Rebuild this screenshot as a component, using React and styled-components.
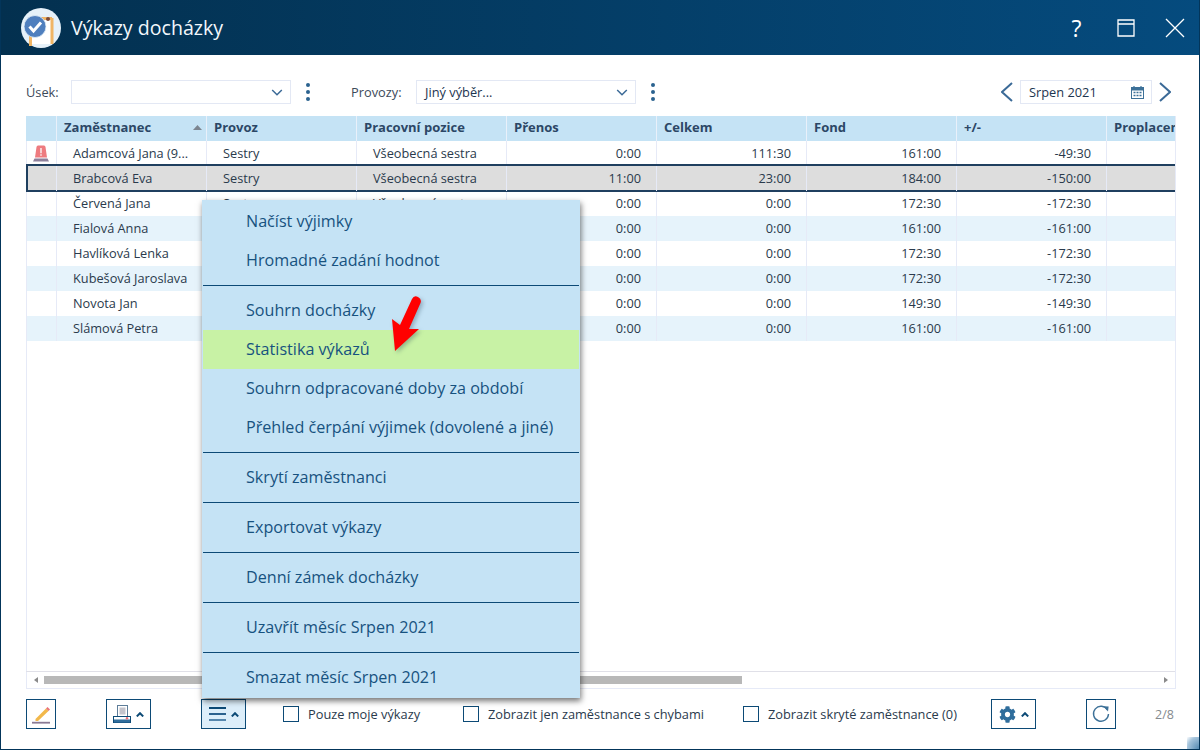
import React from 'react';
import styled, { createGlobalStyle } from 'styled-components';
import { FaCog } from 'react-icons/fa';

const GlobalStyle = createGlobalStyle`
  html, body {
    margin: 0;
    padding: 0;
    background: #fff;
  }
  * { box-sizing: border-box; }
`;

const Window = styled.div`
  position: relative;
  width: 1200px;
  height: 750px;
  display: flex;
  flex-direction: column;
  overflow: hidden;
  background: #fff;
  border: 1px solid #03355a;
  border-top: 0;
  font-family: "Open Sans", sans-serif;
  color: #1d3550;
`;

const TitleBar = styled.div`
  height: 55px;
  margin: 0 -1px;
  flex: none;
  display: flex;
  align-items: center;
  padding: 0 1px 0 21px;
  background: linear-gradient(90deg, #03304f 0%, #054b7e 100%);
`;

const Title = styled.div`
  margin-left: 10px;
  flex: 1;
  font-size: 19.6px;
  color: #f2f7fb;
`;

const WinButton = styled.div`
  width: 49px;
  height: 40px;
  display: flex;
  align-items: center;
  justify-content: center;
  color: #fff;
  font-size: 23px;
`;

const FilterRow = styled.div`
  height: 24px;
  margin: 25px 28px 0 25px;
  flex: none;
  display: flex;
  align-items: center;
`;

const FilterLabel = styled.span`
  color: #3c4a5a;
  font-size: 12.8px;
  width: ${(p) => p.$width}px;
`;

const Select = styled.div`
  width: ${(p) => p.$width}px;
  height: 24px;
  display: flex;
  align-items: center;
  justify-content: space-between;
  padding: 0 7px 0 8px;
  border: 1px solid #e3e8f4;
  font-size: 12.8px;
`;

const DotsButton = styled.div`
  width: 4px;
  margin: 0 41px 0 15px;
  display: flex;
  flex-direction: column;
  gap: 3px;
  i {
    width: 4px;
    height: 4px;
    border-radius: 50%;
    background: #2b628f;
  }
`;

const MonthPicker = styled.div`
  margin-left: auto;
  display: flex;
  align-items: center;
  gap: 7px;
`;

const Grid = styled.div`
  flex: 1;
  margin: 12px 23px 0 25px;
  display: flex;
  flex-direction: column;
  min-height: 0;
  border-right: 1px solid #e6eaf7;
  border-bottom: 1px solid #e6eaf7;
  overflow: hidden;
`;

const Rows = styled.div`
  flex: 1;
  min-height: 0;
  overflow: hidden;
  box-shadow: inset 1px 0 0 #e6eaf7;
`;

const Row = styled.div`
  display: grid;
  grid-template-columns: 31px repeat(8, 150px);
  width: 1231px;
  height: 25px;
`;

const HeadRow = styled(Row)`
  flex: none;
  background: #c5e3f5;
`;

const HeadCell = styled.div`
  display: flex;
  align-items: center;
  justify-content: space-between;
  padding: 0 4px 3px 7px;
  border-right: 1px solid #e9f0fa;
  font-size: 13px;
  font-weight: 700;
  color: #2c4766;
  white-space: nowrap;
`;

const BodyRow = styled(Row)`
  position: relative;
  z-index: ${(p) => (p.$selected ? 1 : 0)};
  background: ${(p) => (p.$selected ? '#dddddd' : p.$alt ? '#e6f3fb' : '#fff')};
  box-shadow: ${(p) =>
    p.$selected
      ? '0 -2px 0 #1f3f5f, 0 1px 0 #1f3f5f, inset 0 -1px 0 #1f3f5f, inset 2px 0 0 #1f3f5f'
      : 'inset 1px 0 0 #e6eaf7'};
`;

const Cell = styled.div`
  display: flex;
  align-items: center;
  justify-content: ${(p) => (p.$num ? 'flex-end' : 'flex-start')};
  padding: ${(p) => (p.$num ? '0 15px 2px 0' : '0 4px 2px 16px')};
  border-right: 1px solid #e6eaf7;
  font-size: 12.75px;
  color: #2a3a4c;
  white-space: nowrap;
  overflow: hidden;
`;

const FlagCell = styled.div`
  display: flex;
  align-items: center;
  justify-content: center;
  border-right: 1px solid #e6eaf7;
`;

const ScrollBar = styled.div`
  height: 17px;
  flex: none;
  display: flex;
  align-items: center;
  justify-content: space-between;
  padding: 0 7px 0 8px;
  border-top: 1px solid #e0e0e8;
  box-shadow: inset 1px 0 0 #e6eaf7;
`;

const ScrollThumb = styled.div`
  width: 698px;
  height: 8px;
  margin: 0 auto 0 6px;
  background: #b8b8b8;
`;

const Toolbar = styled.div`
  height: 30px;
  margin: 10px 0 20px 25px;
  flex: none;
  display: flex;
  align-items: center;
`;

const ToolButton = styled.div`
  width: ${(p) => p.$width}px;
  height: 30px;
  margin-left: ${(p) => p.$left || 0}px;
  flex: none;
  display: flex;
  align-items: center;
  justify-content: center;
  gap: 5px;
  border: 1px solid #0c4a76;
  background: ${(p) => (p.$active ? '#dceefa' : '#fff')};
`;

const CheckItem = styled.label`
  margin-left: ${(p) => p.$left}px;
  width: ${(p) => p.$width}px;
  flex: none;
  display: flex;
  align-items: center;
  gap: 9px;
  font-size: 12.8px;
  line-height: 18px;
  color: #2a3a4c;
  white-space: nowrap;
`;

const CheckBox = styled.span`
  width: 16px;
  height: 16px;
  flex: none;
  border: 1px solid #0c4a76;
  background: #fff;
`;

const Pager = styled.span`
  margin-left: 39px;
  font-size: 12.5px;
  color: #85898e;
`;

const Menu = styled.div`
  position: absolute;
  left: 201px;
  top: 200px;
  width: 378px;
  height: 498px;
  padding: 1.5px 1px 0;
  background: #c5e3f5;
  box-shadow: 1px 3px 6px rgba(0, 0, 0, 0.55);
`;

const MenuItem = styled.div`
  height: 39px;
  display: flex;
  align-items: center;
  padding-left: 43px;
  font-size: 16.15px;
  color: #17527f;
  background: ${(p) => (p.$hot ? '#c8f2a5' : 'transparent')};
`;

const MenuLine = styled.div`
  height: 1px;
  margin: 5px 0;
  background: #0c4a76;
`;

const ArrowMark = styled.svg`
  position: absolute;
  left: 384px;
  top: 290px;
  filter: drop-shadow(2px 2px 2px rgba(40, 70, 90, 0.35));
`;

const Corner = styled.div`
  position: absolute;
  right: -1px;
  bottom: 0;
  width: 13px;
  height: 12px;
  background: radial-gradient(circle at 100% 100%, #4d85ae 0, #a5c4dc 70%, transparent 100%);
`;

const rows = [
  ['Adamcová Jana (9...', 'Sestry', '0:00', '111:30', '161:00', '-49:30'],
  ['Brabcová Eva', 'Sestry', '11:00', '23:00', '184:00', '-150:00'],
  ['Červená Jana', 'Sestry', '0:00', '0:00', '172:30', '-172:30'],
  ['Fialová Anna', 'Sestry', '0:00', '0:00', '161:00', '-161:00'],
  ['Havlíková Lenka', 'Sestry', '0:00', '0:00', '172:30', '-172:30'],
  ['Kubešová Jaroslava', 'Sestry', '0:00', '0:00', '172:30', '-172:30'],
  ['Novota Jan', 'Sestry', '0:00', '0:00', '149:30', '-149:30'],
  ['Slámová Petra', 'Sestry', '0:00', '0:00', '161:00', '-161:00'],
];

const Logo = () => (
  <svg width="40" height="40" viewBox="0 0 40 40">
    <circle cx="20" cy="20" r="20" fill="#e6f1f9" />
    <path d="M9 12 H31 V36 H9 Z" fill="#fff" />
    <path d="M9.5 38 V28 M31 10 V36 M16 10.5 H31" stroke="#f0b565" strokeWidth="3" fill="none" />
    <circle cx="27" cy="11" r="2" fill="#7a4a3a" />
    <circle cx="14" cy="18.5" r="11" fill="#4f7fbe" stroke="#e6f1f9" strokeWidth="0.8" />
    <path d="M8.5 18.5 L12.5 23 L20 14.5" stroke="#fff" strokeWidth="3" fill="none" />
  </svg>
);

const Chevron = ({ up, color = '#0c4a76', size = 8, weight = 1.5 }) => (
  <svg width={size} height={size - 3} viewBox="0 0 8 5">
    <path d={up ? 'M0.8 4.4 L4 1.2 L7.2 4.4' : 'M0.8 0.8 L4 4 L7.2 0.8'} stroke={color} strokeWidth={weight} fill="none" />
  </svg>
);

const Dots = () => (
  <DotsButton>
    <i />
    <i />
    <i />
  </DotsButton>
);

const Siren = () => (
  <svg width="16" height="17" viewBox="0 0 16 17">
    <path d="M2 12.5 L3.5 2 Q3.7 0.5 5 0.5 H11 Q12.3 0.5 12.5 2 L14 12.5 Z" fill="#ee7b7f" />
    <path d="M7.2 3 H8.8 V8.2 H7.2 Z M7.2 9.2 H8.8 V10.8 H7.2 Z" fill="#fbe6e6" />
    <path d="M1.5 13.5 H14.5 L16 16.5 H0 Z" fill="#8d7f9a" />
  </svg>
);

const Pencil = () => (
  <svg width="20" height="20" viewBox="0 0 20 20">
    <path d="M4.5 15 L15 4.5 L17.5 7 L7 17 L4.5 17 Z" fill="#f2b84b" />
    <path d="M15 4.5 L16.5 3 L19 5.5 L17.5 7 Z" fill="#e8747a" />
    <path d="M1 18.7 H19" stroke="#8a7a94" strokeWidth="1.8" />
  </svg>
);

const Printer = () => (
  <svg width="18" height="18" viewBox="0 0 18 18">
    <rect x="4.5" y="0.5" width="10" height="11" fill="#fff" stroke="#5e7d99" />
    <rect x="6.5" y="2.5" width="6" height="7" fill="#c4c4cc" />
    <rect x="0.5" y="11.5" width="17" height="6" fill="#fff" stroke="#0c4a76" />
    <rect x="1" y="14.5" width="16" height="3" fill="#2f6d9c" />
    <circle cx="14" cy="13.2" r="1.2" fill="#ea6a75" />
  </svg>
);

const Hamburger = () => (
  <svg width="17" height="14" viewBox="0 0 17 14">
    <path d="M0 1 H17" stroke="#0c4a76" strokeWidth="2" />
    <path d="M0 7 H17" stroke="#2b628f" strokeWidth="2" />
    <path d="M0 13 H17" stroke="#5486ad" strokeWidth="2" />
  </svg>
);

const Refresh = () => (
  <svg width="18" height="18" viewBox="0 0 18 18">
    <path d="M15.5 5 A7.5 7.5 0 1 0 16.5 9" stroke="#3d7198" strokeWidth="1.4" fill="none" />
    <path d="M11.5 1.2 L16.6 1.6 L16 6.4 Z" fill="#3d7198" />
  </svg>
);

const Calendar = () => (
  <svg width="13" height="13" viewBox="0 0 13 13">
    <rect x="0.5" y="1.5" width="12" height="11" fill="#fff" stroke="#3d7198" />
    <rect x="0.5" y="1.5" width="12" height="3" fill="#3d7198" />
    <path d="M3 0 V2 M10 0 V2" stroke="#3d7198" strokeWidth="1.2" />
    <path d="M2.5 6.5 H4.5 M5.5 6.5 H7.5 M8.5 6.5 H10.5 M2.5 9.5 H4.5 M5.5 9.5 H7.5 M8.5 9.5 H10.5" stroke="#3d7198" strokeWidth="1.6" />
  </svg>
);

const MonthArrow = ({ right }) => (
  <svg width="12" height="20" viewBox="0 0 12 20">
    <path d={right ? 'M1 1 L11 10 L1 19' : 'M11 1 L1 10 L11 19'} stroke="#3b6a97" strokeWidth="2" fill="none" />
  </svg>
);

export default function App() {
  return (
    <Window>
      <GlobalStyle />
      <TitleBar>
        <Logo />
        <Title>Výkazy docházky</Title>
        <WinButton>?</WinButton>
        <WinButton>
          <svg width="18" height="18" viewBox="0 0 18 18">
            <path d="M1 1 H17 V17 H1 Z M1 5 H17" stroke="#fff" strokeWidth="1.3" fill="none" />
          </svg>
        </WinButton>
        <WinButton>
          <svg width="20" height="20" viewBox="0 0 20 20">
            <path d="M1 1 L19 19 M19 1 L1 19" stroke="#fff" strokeWidth="1.3" />
          </svg>
        </WinButton>
      </TitleBar>

      <FilterRow>
        <FilterLabel $width={45}>Úsek:</FilterLabel>
        <Select $width={220}>
          <span />
          <Chevron size={12} color="#3b6a97" weight={1} />
        </Select>
        <Dots />
        <FilterLabel $width={65}>Provozy:</FilterLabel>
        <Select $width={220}>
          <span>Jiný výběr...</span>
          <Chevron size={12} color="#3b6a97" weight={1} />
        </Select>
        <Dots />
        <MonthPicker>
          <MonthArrow />
          <Select $width={132}>
            <span>Srpen 2021</span>
            <Calendar />
          </Select>
          <MonthArrow right />
        </MonthPicker>
      </FilterRow>

      <Grid>
        <HeadRow>
          <HeadCell />
          <HeadCell>
            Zaměstnanec
            <svg width="9" height="5" viewBox="0 0 9 5">
              <path d="M0 5 L4.5 0 L9 5 Z" fill="#7c8590" />
            </svg>
          </HeadCell>
          <HeadCell>Provoz</HeadCell>
          <HeadCell>Pracovní pozice</HeadCell>
          <HeadCell>Přenos</HeadCell>
          <HeadCell>Celkem</HeadCell>
          <HeadCell>Fond</HeadCell>
          <HeadCell>+/-</HeadCell>
          <HeadCell>Proplacené</HeadCell>
        </HeadRow>
        <Rows>
          {rows.map((r, i) => (
            <BodyRow key={r[0]} $selected={i === 1} $alt={i > 1 && i % 2 === 1}>
              <FlagCell>{i === 0 && <Siren />}</FlagCell>
              <Cell>{r[0]}</Cell>
              <Cell>{r[1]}</Cell>
              <Cell>Všeobecná sestra</Cell>
              <Cell $num>{r[2]}</Cell>
              <Cell $num>{r[3]}</Cell>
              <Cell $num>{r[4]}</Cell>
              <Cell $num>{r[5]}</Cell>
              <Cell />
            </BodyRow>
          ))}
        </Rows>
        <ScrollBar>
          <svg width="4" height="6" viewBox="0 0 4 6">
            <path d="M4 0 V6 L0 3 Z" fill="#8a8a8a" />
          </svg>
          <ScrollThumb />
          <svg width="4" height="6" viewBox="0 0 4 6">
            <path d="M0 0 V6 L4 3 Z" fill="#8a8a8a" />
          </svg>
        </ScrollBar>
      </Grid>

      <Toolbar>
        <ToolButton $width={30}>
          <Pencil />
        </ToolButton>
        <ToolButton $width={45} $left={50}>
          <Printer />
          <Chevron up size={8} weight={2} />
        </ToolButton>
        <ToolButton $width={45} $left={50} $active>
          <Hamburger />
          <Chevron up size={8} weight={2} />
        </ToolButton>
        <CheckItem $left={37} $width={180}>
          <CheckBox />
          Pouze moje výkazy
        </CheckItem>
        <CheckItem $left={0} $width={280}>
          <CheckBox />
          Zobrazit jen zaměstnance s chybami
        </CheckItem>
        <CheckItem $left={0} $width={248}>
          <CheckBox />
          Zobrazit skryté zaměstnance (0)
        </CheckItem>
        <ToolButton $width={45}>
          <FaCog size={17} color="#2f6d9c" />
          <Chevron up size={8} weight={2} />
        </ToolButton>
        <ToolButton $width={30} $left={50}>
          <Refresh />
        </ToolButton>
        <Pager>2/8</Pager>
      </Toolbar>

      <Menu>
        <MenuItem>Načíst výjimky</MenuItem>
        <MenuItem>Hromadné zadání hodnot</MenuItem>
        <MenuLine />
        <MenuItem>Souhrn docházky</MenuItem>
        <MenuItem $hot>Statistika výkazů</MenuItem>
        <MenuItem>Souhrn odpracované doby za období</MenuItem>
        <MenuItem>Přehled čerpání výjimek (dovolené a jiné)</MenuItem>
        <MenuLine />
        <MenuItem>Skrytí zaměstnanci</MenuItem>
        <MenuLine />
        <MenuItem>Exportovat výkazy</MenuItem>
        <MenuLine />
        <MenuItem>Denní zámek docházky</MenuItem>
        <MenuLine />
        <MenuItem>Uzavřít měsíc Srpen 2021</MenuItem>
        <MenuLine />
        <MenuItem>Smazat měsíc Srpen 2021</MenuItem>
      </Menu>

      <ArrowMark width="42" height="66" viewBox="0 0 42 66">
        <path
          d="M7 29 L15 35 L27 9 Q29 5 33 7 Q37 9 35.5 13 L24 39 L34 39 L10 61 Z"
          fill="#f00"
        />
      </ArrowMark>
      <Corner />
    </Window>
  );
}
